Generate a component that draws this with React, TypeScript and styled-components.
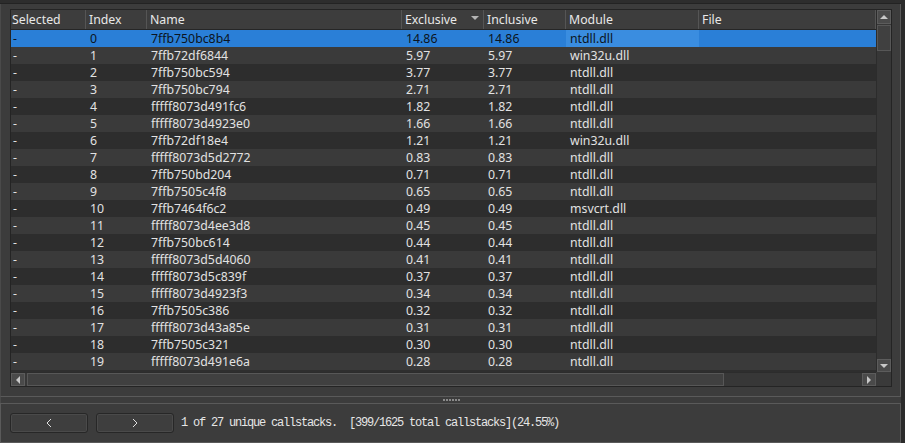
import styled, { createGlobalStyle } from "styled-components";

const GlobalStyle = createGlobalStyle`
  html, body {
    margin: 0;
    padding: 0;
    background: #2b2b2b;
  }
  * {
    box-sizing: border-box;
  }
`;

type Row = {
  name: string;
  exclusive: string;
  inclusive: string;
  module: string;
};

const rows: Row[] = [
  { name: "7ffb750bc8b4", exclusive: "14.86", inclusive: "14.86", module: "ntdll.dll" },
  { name: "7ffb72df6844", exclusive: "5.97", inclusive: "5.97", module: "win32u.dll" },
  { name: "7ffb750bc594", exclusive: "3.77", inclusive: "3.77", module: "ntdll.dll" },
  { name: "7ffb750bc794", exclusive: "2.71", inclusive: "2.71", module: "ntdll.dll" },
  { name: "fffff8073d491fc6", exclusive: "1.82", inclusive: "1.82", module: "ntdll.dll" },
  { name: "fffff8073d4923e0", exclusive: "1.66", inclusive: "1.66", module: "ntdll.dll" },
  { name: "7ffb72df18e4", exclusive: "1.21", inclusive: "1.21", module: "win32u.dll" },
  { name: "fffff8073d5d2772", exclusive: "0.83", inclusive: "0.83", module: "ntdll.dll" },
  { name: "7ffb750bd204", exclusive: "0.71", inclusive: "0.71", module: "ntdll.dll" },
  { name: "7ffb7505c4f8", exclusive: "0.65", inclusive: "0.65", module: "ntdll.dll" },
  { name: "7ffb7464f6c2", exclusive: "0.49", inclusive: "0.49", module: "msvcrt.dll" },
  { name: "fffff8073d4ee3d8", exclusive: "0.45", inclusive: "0.45", module: "ntdll.dll" },
  { name: "7ffb750bc614", exclusive: "0.44", inclusive: "0.44", module: "ntdll.dll" },
  { name: "fffff8073d5d4060", exclusive: "0.41", inclusive: "0.41", module: "ntdll.dll" },
  { name: "fffff8073d5c839f", exclusive: "0.37", inclusive: "0.37", module: "ntdll.dll" },
  { name: "fffff8073d4923f3", exclusive: "0.34", inclusive: "0.34", module: "ntdll.dll" },
  { name: "7ffb7505c386", exclusive: "0.32", inclusive: "0.32", module: "ntdll.dll" },
  { name: "fffff8073d43a85e", exclusive: "0.31", inclusive: "0.31", module: "ntdll.dll" },
  { name: "7ffb7505c321", exclusive: "0.30", inclusive: "0.30", module: "ntdll.dll" },
  { name: "fffff8073d491e6a", exclusive: "0.28", inclusive: "0.28", module: "ntdll.dll" },
];

const COLS = "75px 61px 255px 82px 82px 133px 177px";

const Window = styled.div`
  width: 905px;
  height: 443px;
  display: flex;
  flex-direction: column;
  background: #2b2b2b;
  font-family: "Noto Sans", "Open Sans", sans-serif;
  font-size: 12.3px;
  color: #e2e2e2;
  overflow: hidden;
`;

const TopStrip = styled.div`
  height: 4px;
  flex-shrink: 0;
  width: 901px;
  background: #2d2d2d;
  border-bottom: 1px solid #232323;
`;

const UpperPanel = styled.div`
  width: 901px;
  height: 393px;
  flex-shrink: 0;
  background: #3c3c3c;
  border-left: 1px solid #4a4a4a;
  border-right: 1px solid #5a5a5a;
  border-bottom: 1px solid #5a5a5a;
  padding: 5px 8px 0 9px;
`;

const TableFrame = styled.div`
  width: 882px;
  height: 378px;
  border: 1px solid #242424;
  display: grid;
  grid-template-columns: 865px 15px;
  grid-template-rows: 1fr 14px;
  background: #2e2e2e;
`;

const TableArea = styled.div`
  display: flex;
  flex-direction: column;
  overflow: hidden;
`;

const HeaderRow = styled.div`
  display: grid;
  grid-template-columns: ${COLS};
  height: 20px;
  flex-shrink: 0;
  background: #3d3d3d;
  border-bottom: 1px solid #262626;
`;

const HeaderCell = styled.div`
  display: flex;
  align-items: center;
  justify-content: space-between;
  padding: 0 4px 1px 3px;
  border-right: 1px solid #555555;
  color: #e8e8e8;
  white-space: nowrap;

  &:first-child {
    padding-left: 1px;
  }
`;

const SortArrow = styled.span`
  width: 0;
  height: 0;
  border-left: 4px solid transparent;
  border-right: 4px solid transparent;
  border-top: 4px solid #b4b4b4;
  margin-bottom: 2px;
`;

const Body = styled.div`
  flex: 1;
  overflow: hidden;
`;

const DataRow = styled.div<{ $selected?: boolean; $odd?: boolean }>`
  display: grid;
  grid-template-columns: ${COLS};
  height: 17px;
  background: ${({ $selected, $odd }) =>
    $selected ? "#2a7fd7" : $odd ? "#3a3a3a" : "#2d2d2d"};
  color: ${({ $selected }) => ($selected ? "#0c1420" : "#e2e2e2")};
`;

const Cell = styled.div<{ $focus?: boolean }>`
  display: flex;
  align-items: center;
  padding: 0 0 1px 4px;
  white-space: nowrap;
  overflow: hidden;
  background: ${({ $focus }) => ($focus ? "#3a8de0" : "transparent")};

  &:first-child {
    padding-left: 2px;
  }
`;

const VScroll = styled.div`
  display: flex;
  flex-direction: column;
  background: #373737;
  border-left: 1px solid #2c2c2c;
`;

const ScrollButton = styled.div<{ $w?: number; $h?: number }>`
  width: ${({ $w }) => ($w ? `${$w}px` : "100%")};
  height: ${({ $h }) => ($h ? `${$h}px` : "100%")};
  flex-shrink: 0;
  display: flex;
  align-items: center;
  justify-content: center;
  background: #4a4a4a;
  border: 1px solid #5c5c5c;
`;

const VThumb = styled.div`
  height: 26px;
  margin-top: 1px;
  flex-shrink: 0;
  background: #404040;
  border: 1px solid #575757;
`;

const Track = styled.div`
  flex: 1;
`;

const HScroll = styled.div`
  display: flex;
  align-items: stretch;
  background: #373737;
  border-top: 1px solid #2c2c2c;
`;

const HThumb = styled.div`
  width: 697px;
  margin-left: 2px;
  flex-shrink: 0;
  background: #404040;
  border: 1px solid #575757;
`;

const Corner = styled.div`
  background: #3a3a3a;
`;

const Splitter = styled.div`
  width: 901px;
  height: 6px;
  flex-shrink: 0;
  display: flex;
  align-items: center;
  justify-content: center;
  gap: 1px;
  background: #3c3c3c;
  border-left: 1px solid #4a4a4a;
`;

const Dot = styled.span`
  width: 2px;
  height: 2px;
  background: #8a8a8a;
`;

const LowerPanel = styled.div`
  width: 901px;
  flex: 1;
  background: #3c3c3c;
  border: 1px solid #5a5a5a;
  display: flex;
  align-items: flex-start;
  gap: 8px;
  padding: 9px 9px 0 9px;
`;

const NavButton = styled.button`
  width: 78px;
  height: 20px;
  padding: 0;
  display: flex;
  align-items: center;
  justify-content: center;
  background: #3e3e3e;
  border: 1px solid #272727;
  border-radius: 3px;
  box-shadow: inset 0 0 0 1px #4a4a4a;
  color: #e0e0e0;
`;

const StatusText = styled.span`
  font-family: "Liberation Mono", "DejaVu Sans Mono", monospace;
  font-size: 12px;
  letter-spacing: -1.2px;
  color: #e6e6e6;
  line-height: 20px;
  margin-left: -1px;
  white-space: pre;
`;

const Triangle = ({ dir }: { dir: "up" | "down" | "left" | "right" }) => {
  const pts = {
    up: "0,5 4,1 8,5",
    down: "0,1 8,1 4,5",
    left: "5,0 5,8 1,4",
    right: "1,0 1,8 5,4",
  }[dir];
  const vertical = dir === "up" || dir === "down";
  return (
    <svg width={vertical ? 8 : 6} height={vertical ? 6 : 8} viewBox={vertical ? "0 0 8 6" : "0 0 6 8"}>
      <polygon points={pts} fill="#c8c8c8" />
    </svg>
  );
};

const Chevron = ({ left }: { left?: boolean }) => (
  <svg width="6" height="10" viewBox="0 0 6 10">
    <polyline
      points={left ? "5,1 1,5 5,9" : "1,1 5,5 1,9"}
      fill="none"
      stroke="#e0e0e0"
      strokeWidth="1"
    />
  </svg>
);

const App = () => {
  return (
    <>
      <GlobalStyle />
      <Window>
        <TopStrip />
        <UpperPanel>
          <TableFrame>
            <TableArea>
              <HeaderRow>
                <HeaderCell>Selected</HeaderCell>
                <HeaderCell>Index</HeaderCell>
                <HeaderCell>Name</HeaderCell>
                <HeaderCell>
                  Exclusive
                  <SortArrow />
                </HeaderCell>
                <HeaderCell>Inclusive</HeaderCell>
                <HeaderCell>Module</HeaderCell>
                <HeaderCell>File</HeaderCell>
              </HeaderRow>
              <Body>
                {rows.map((r, i) => (
                  <DataRow key={i} $selected={i === 0} $odd={i % 2 === 1}>
                    <Cell>-</Cell>
                    <Cell>{i}</Cell>
                    <Cell>{r.name}</Cell>
                    <Cell>{r.exclusive}</Cell>
                    <Cell>{r.inclusive}</Cell>
                    <Cell $focus={i === 0}>{r.module}</Cell>
                    <Cell />
                  </DataRow>
                ))}
              </Body>
            </TableArea>
            <VScroll>
              <ScrollButton $h={14}>
                <Triangle dir="up" />
              </ScrollButton>
              <VThumb />
              <Track />
              <ScrollButton $h={13}>
                <Triangle dir="down" />
              </ScrollButton>
            </VScroll>
            <HScroll>
              <ScrollButton $w={14}>
                <Triangle dir="left" />
              </ScrollButton>
              <HThumb />
              <Track />
              <ScrollButton $w={14}>
                <Triangle dir="right" />
              </ScrollButton>
            </HScroll>
            <Corner />
          </TableFrame>
        </UpperPanel>
        <Splitter>
          {Array.from({ length: 6 }).map((_, i) => (
            <Dot key={i} />
          ))}
        </Splitter>
        <LowerPanel>
          <NavButton>
            <Chevron left />
          </NavButton>
          <NavButton>
            <Chevron />
          </NavButton>
          <StatusText>
            {"1 of 27 unique callstacks.  [399/1625 total callstacks](24.55%)"}
          </StatusText>
        </LowerPanel>
      </Window>
    </>
  );
};

export default App;
